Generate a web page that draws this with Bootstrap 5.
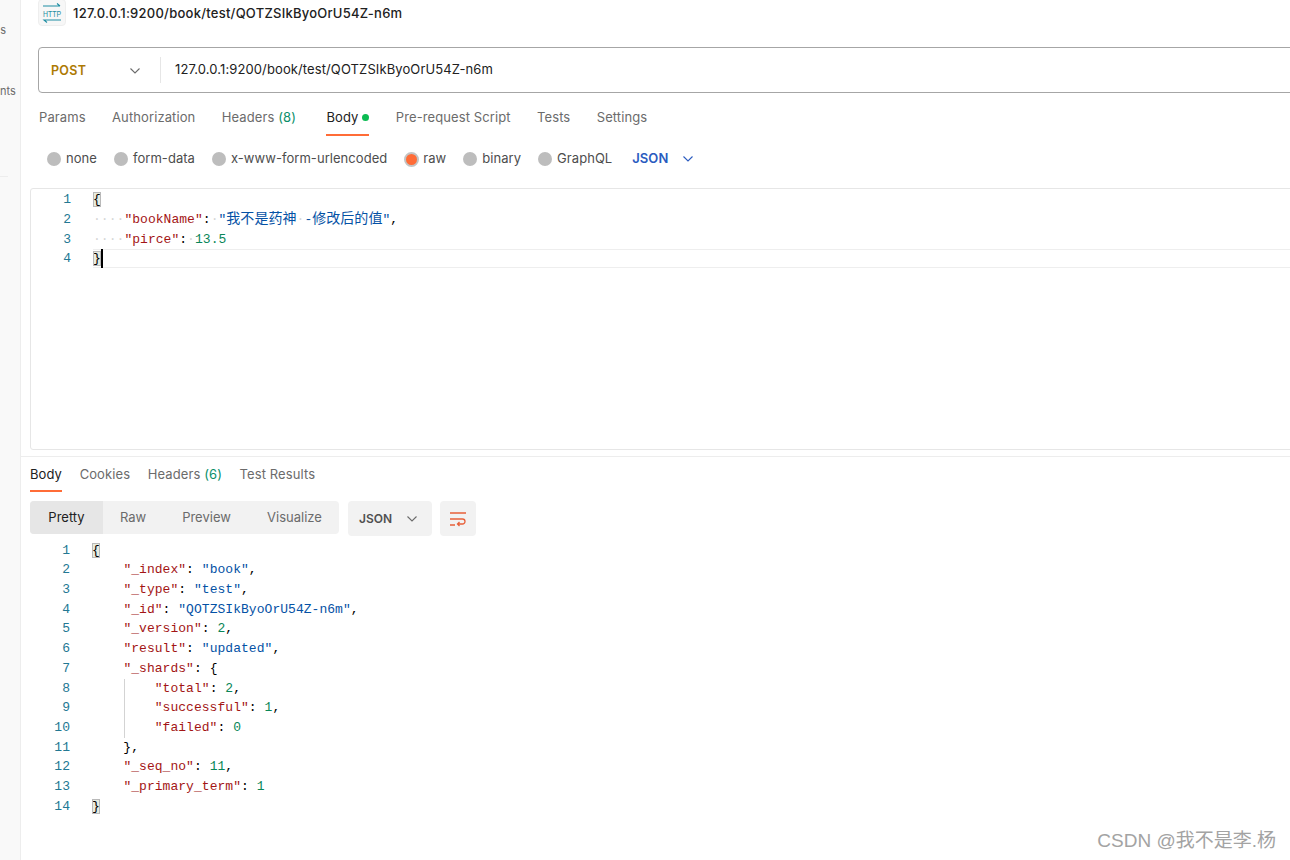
<!DOCTYPE html>
<html lang="en">
<head>
<meta charset="utf-8">
<title>Postman request</title>
<link rel="stylesheet" href="https://cdn.jsdelivr.net/npm/bootstrap@5.3.0/dist/css/bootstrap.min.css">
<style>
html,body{height:860px;overflow:hidden;background:#fff}
body{font-family:Inter,"Noto Sans CJK SC",sans-serif;font-size:13px;color:#212121}
.pm-shell{width:1290px;height:860px}
.pm-side{width:21px;flex:none;background:#f9f9f9;border-right:1px solid #ededed;color:#6b6b6b;font-size:11px;text-align:right;overflow:hidden}
.pm-side-s{height:24px;margin-top:18px;line-height:24px;margin-right:14px}
.pm-side-nts{margin-top:37px;height:24px;line-height:24px;white-space:nowrap;margin-right:8px}
.pm-side-line{border-top:1px solid #ededed;margin-top:73px;margin-right:12px}
.pm-main{flex:1 1 auto;min-width:0;overflow:hidden}
.pm-head{height:26px;padding-left:17px;gap:7px}
.pm-httpbox{width:28px;height:27px;margin-top:-1px;background:#f7f7f7;border:1px solid #eee;border-radius:4px}
.pm-httpicon{overflow:visible}
.pm-title{font-weight:500;font-size:13px;letter-spacing:.25px;line-height:24px;white-space:nowrap}
.pm-url{margin:21px -20px 0 17px;height:46px;border:1px solid #a6a6a6;border-radius:4px}
.pm-method{width:121px;flex:none;padding:2px 19px 0 12px;color:#ad7a03;font-weight:600;font-size:12.5px;letter-spacing:.3px}
.pm-urlsep{width:1px;height:26px;background:#e6e6e6}
.pm-urltext{padding-left:14px;color:#212121;font-size:13px;letter-spacing:.11px}
.pm-tabs{padding-left:18px;height:43px;gap:26.4px;color:#6b6b6b;font-size:13px;letter-spacing:.1px}
.pm-tab{height:43px;line-height:48px;white-space:nowrap}
.pm-tab-wide{margin-right:4px}
.pm-tab-on{color:#212121;border-bottom:2px solid #ff6c37}
.pm-num{color:#0a8f6a}
.pm-dot{display:inline-block;width:7px;height:7px;border-radius:50%;background:#0cbb52;margin-left:4px;vertical-align:1px}
.pm-body{padding:2px 0 0 26px;height:44px;gap:17px;font-size:13px;color:#4d4d4d;letter-spacing:.05px}
.pm-opt{gap:5px;white-space:nowrap}
.pm-opt-raw{gap:4px}
.pm-radio{width:14px;height:14px;border-radius:50%;background:#bdbdbd;flex:none}
.pm-radio-on{background:#ff6c37;border:2px solid #c4c4c4;width:15px;height:15px}
.pm-json{color:#2a5bbf;font-weight:600;font-size:13px;gap:14px;margin-left:3px}
.pm-editor{margin:8px -20px 0 9px;height:262px;padding-top:1.35px;border:1px solid #e6e6e6;border-radius:3px 0 0 3px}
.pm-code{font-family:"Liberation Mono","Noto Sans CJK SC",monospace;font-size:13px;letter-spacing:.04px;color:#000}
.pm-line{height:19.7px;line-height:19.7px;white-space:pre}
.pm-ln{display:inline-block;width:40px;text-align:right;margin-right:22px;color:#237893}
.pm-active{height:19px;box-shadow:inset 0 1px 0 #eee,inset 0 -1px 0 #eee;margin-left:62px}
.pm-active .pm-ln{margin-left:-62px}
.pm-k{color:#a31515}
.pm-s{color:#0451a5}
.pm-n{color:#098658}
.pm-w{color:#d6d6d6}
.pm-br{background:#e8ecdf;outline:1px solid #b9b9b9;outline-offset:-1px}
.pm-caret{display:inline-block;width:2px;height:19px;background:#000;vertical-align:top}
.pm-cjk{font-family:"Noto Sans CJK SC",sans-serif;font-size:14px;line-height:0}
.pm-divider{border-top:1px solid #ededed;margin-top:6px}
.pm-rtabs{padding-left:9px;margin-top:1px;height:34px;gap:17.6px;color:#6b6b6b;letter-spacing:.1px}
.pm-rtab{height:34px;line-height:33px;white-space:nowrap}
.pm-tools{padding-left:9px;margin-top:9px;height:35px;gap:9px;align-items:flex-start}
.pm-seg{height:33px;width:309px;background:#f2f2f2;border-radius:4px;overflow:hidden;color:#6b6b6b}
.pm-seg span{display:block;line-height:32px;text-align:center;height:33px}
.pm-seg .pm-seg-on{width:73px;background:#e6e6e6;color:#212121}
.pm-seg-raw{width:60px}.pm-seg-prev{width:87px}.pm-seg-vis{width:89px}
.pm-fmt{height:35px;width:84px;background:#f2f2f2;border-radius:4px;font-weight:600;font-size:12px;color:#505050;padding-left:11px;gap:14px}
.pm-wrap{height:35px;width:36px;margin-left:-1px;background:#f2f2f2;border-radius:4px}
.pm-resp{margin-top:4.7px;margin-left:9px}
.pm-guide{position:relative}
.pm-guide::before{content:"";position:absolute;left:94px;top:0;bottom:0;border-left:1px solid #d3d3d3}
.pm-mark{position:absolute;right:14px;bottom:5px;color:#a3a3a3;font-family:"Liberation Sans","Noto Sans CJK SC",sans-serif;font-size:19px;line-height:28px}
</style>
</head>
<body>
<div class="pm-shell d-flex position-relative">
  <aside class="pm-side">
    <div class="pm-side-s">s</div>
    <div class="pm-side-nts">nts</div>
    <div class="pm-side-line"></div>
  </aside>
  <main class="pm-main">
    <div class="pm-head d-flex align-items-center">
      <div class="pm-httpbox d-flex align-items-center justify-content-center">
        <svg class="pm-httpicon" width="20" height="22" viewBox="0 0 20 22" fill="none" stroke="#1f8ea3" stroke-width="1.1"><path d="M1 4H18M15 1.5 18 4"/><path d="M19 18H2l3 2.5"/><text x="1" y="14.5" font-family="Liberation Sans,sans-serif" font-size="9" fill="#1f8ea3" stroke="none" textLength="18" lengthAdjust="spacingAndGlyphs">HTTP</text></svg>
      </div>
      <div class="pm-title">127.0.0.1:9200/book/test/QOTZSIkByoOrU54Z-n6m</div>
    </div>
    <div class="pm-url d-flex align-items-center">
      <div class="pm-method d-flex align-items-center justify-content-between">
        <span>POST</span>
        <svg width="12" height="8" viewBox="0 0 12 8" fill="none" stroke="#6b6b6b" stroke-width="1.1"><path d="M1.5 1.5 6 6l4.5-4.5"/></svg>
      </div>
      <div class="pm-urlsep"></div>
      <div class="pm-urltext">127.0.0.1:9200/book/test/QOTZSIkByoOrU54Z-n6m</div>
    </div>
    <div class="pm-tabs d-flex">
      <div class="pm-tab">Params</div>
      <div class="pm-tab">Authorization</div>
      <div class="pm-tab pm-tab-wide">Headers <span class="pm-num">(8)</span></div>
      <div class="pm-tab pm-tab-on">Body<span class="pm-dot"></span></div>
      <div class="pm-tab">Pre-request Script</div>
      <div class="pm-tab">Tests</div>
      <div class="pm-tab">Settings</div>
    </div>
    <div class="pm-body d-flex align-items-center">
      <div class="pm-opt d-flex align-items-center"><span class="pm-radio"></span>none</div>
      <div class="pm-opt d-flex align-items-center"><span class="pm-radio"></span>form-data</div>
      <div class="pm-opt d-flex align-items-center"><span class="pm-radio"></span>x-www-form-urlencoded</div>
      <div class="pm-opt pm-opt-raw d-flex align-items-center"><span class="pm-radio pm-radio-on"></span>raw</div>
      <div class="pm-opt d-flex align-items-center"><span class="pm-radio"></span>binary</div>
      <div class="pm-opt d-flex align-items-center"><span class="pm-radio"></span>GraphQL</div>
      <div class="pm-json d-flex align-items-center"><span>JSON</span>
        <svg width="12" height="8" viewBox="0 0 12 8" fill="none" stroke="#2a5bbf" stroke-width="1.1"><path d="M1.5 1.5 6 6l4.5-4.5"/></svg>
      </div>
    </div>
    <div class="pm-editor pm-code">
      <div class="pm-line"><span class="pm-ln">1</span><span class="pm-br">{</span></div>
      <div class="pm-line"><span class="pm-ln">2</span><span class="pm-w">····</span><span class="pm-k">"bookName"</span>:<span class="pm-w">·</span><span class="pm-s">"<span class="pm-cjk">我不是药神</span><span class="pm-w">·</span>-<span class="pm-cjk">修改后的值</span>"</span>,</div>
      <div class="pm-line"><span class="pm-ln">3</span><span class="pm-w">····</span><span class="pm-k">"pirce"</span>:<span class="pm-w">·</span><span class="pm-n">13.5</span></div>
      <div class="pm-line pm-active"><span class="pm-ln">4</span><span class="pm-br">}</span><span class="pm-caret"></span></div>
    </div>
    <div class="pm-divider"></div>
    <div class="pm-rtabs d-flex">
      <div class="pm-rtab pm-tab-on">Body</div>
      <div class="pm-rtab">Cookies</div>
      <div class="pm-rtab">Headers <span class="pm-num">(6)</span></div>
      <div class="pm-rtab">Test Results</div>
    </div>
    <div class="pm-tools d-flex">
      <div class="pm-seg d-flex">
        <span class="pm-seg-on">Pretty</span><span class="pm-seg-raw">Raw</span><span class="pm-seg-prev">Preview</span><span class="pm-seg-vis">Visualize</span>
      </div>
      <div class="pm-fmt d-flex align-items-center"><span>JSON</span>
        <svg width="12" height="8" viewBox="0 0 12 8" fill="none" stroke="#6b6b6b" stroke-width="1.1"><path d="M1.5 1.5 6 6l4.5-4.5"/></svg>
      </div>
      <div class="pm-wrap d-flex align-items-center justify-content-center">
        <svg width="18" height="16" viewBox="0 0 18 16" fill="none" stroke="#e8603a" stroke-width="1.3"><path d="M1 2h16M1 8h12.5a2.5 2.5 0 0 1 0 5H8.5M10.5 11l-2 2 2 2M1 14h5"/></svg>
      </div>
    </div>
    <div class="pm-resp pm-code">
      <div class="pm-line"><span class="pm-ln">1</span><span class="pm-br">{</span></div>
      <div class="pm-line"><span class="pm-ln">2</span>    <span class="pm-k">"_index"</span>: <span class="pm-s">"book"</span>,</div>
      <div class="pm-line"><span class="pm-ln">3</span>    <span class="pm-k">"_type"</span>: <span class="pm-s">"test"</span>,</div>
      <div class="pm-line"><span class="pm-ln">4</span>    <span class="pm-k">"_id"</span>: <span class="pm-s">"QOTZSIkByoOrU54Z-n6m"</span>,</div>
      <div class="pm-line"><span class="pm-ln">5</span>    <span class="pm-k">"_version"</span>: <span class="pm-n">2</span>,</div>
      <div class="pm-line"><span class="pm-ln">6</span>    <span class="pm-k">"result"</span>: <span class="pm-s">"updated"</span>,</div>
      <div class="pm-line"><span class="pm-ln">7</span>    <span class="pm-k">"_shards"</span>: {</div>
      <div class="pm-guide">
        <div class="pm-line"><span class="pm-ln">8</span>        <span class="pm-k">"total"</span>: <span class="pm-n">2</span>,</div>
        <div class="pm-line"><span class="pm-ln">9</span>        <span class="pm-k">"successful"</span>: <span class="pm-n">1</span>,</div>
        <div class="pm-line"><span class="pm-ln">10</span>        <span class="pm-k">"failed"</span>: <span class="pm-n">0</span></div>
      </div>
      <div class="pm-line"><span class="pm-ln">11</span>    },</div>
      <div class="pm-line"><span class="pm-ln">12</span>    <span class="pm-k">"_seq_no"</span>: <span class="pm-n">11</span>,</div>
      <div class="pm-line"><span class="pm-ln">13</span>    <span class="pm-k">"_primary_term"</span>: <span class="pm-n">1</span></div>
      <div class="pm-line"><span class="pm-ln">14</span><span class="pm-br">}</span></div>
    </div>
  </main>
  <div class="pm-mark">CSDN @我不是李.杨</div>
</div>
<script src="https://cdn.jsdelivr.net/npm/bootstrap@5.3.0/dist/js/bootstrap.bundle.min.js"></script>
</body>
</html>
